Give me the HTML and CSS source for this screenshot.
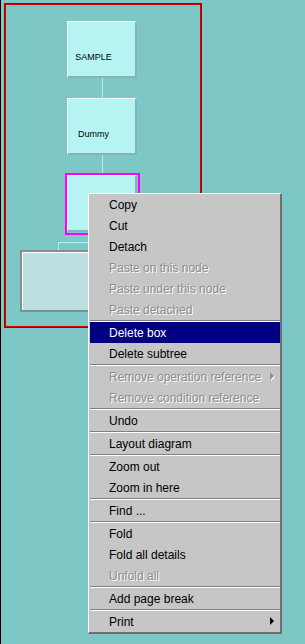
FILE: index.html
```html
<!DOCTYPE html>
<html lang="en">
<head>
  <meta charset="UTF-8" />
  <title>Diagram</title>
  <link rel="stylesheet" href="styles.css">
</head>
<body>

  <!-- diagram canvas -->
  <div class="canvas">
    <div class="frame"></div>

    <div class="node node-sample"><span>SAMPLE</span></div>
    <div class="wire wire-1"></div>
    <div class="node node-dummy"><span>Dummy</span></div>
    <div class="wire wire-2"></div>
    <div class="node node-third"></div>
    <div class="selected"></div>
    <div class="wire wire-3"></div>
    <div class="wire wire-4"></div>
    <div class="wire wire-5"></div>
    <div class="bigbox"></div>
  </div>

  <!-- context menu -->
  <div class="menu">
    <div class="item">Copy</div>
    <div class="item">Cut</div>
    <div class="item">Detach</div>
    <div class="item disabled">Paste on this node</div>
    <div class="item disabled">Paste under this node</div>
    <div class="item disabled">Paste detached</div>
    <div class="sep"></div>
    <div class="item active">Delete box</div>
    <div class="item">Delete subtree</div>
    <div class="sep"></div>
    <div class="item disabled sub">Remove operation reference</div>
    <div class="item disabled">Remove condition reference</div>
    <div class="sep"></div>
    <div class="item">Undo</div>
    <div class="sep"></div>
    <div class="item">Layout diagram</div>
    <div class="sep"></div>
    <div class="item">Zoom out</div>
    <div class="item">Zoom in here</div>
    <div class="sep"></div>
    <div class="item">Find ...</div>
    <div class="sep"></div>
    <div class="item">Fold</div>
    <div class="item">Fold all details</div>
    <div class="item disabled">Unfold all</div>
    <div class="sep"></div>
    <div class="item">Add page break</div>
    <div class="sep"></div>
    <div class="item sub">Print</div>
  </div>

</body>
</html>
```

FILE: styles.css
```css
body {
  margin: 0;
  width: 305px;
  height: 644px;
  overflow: hidden;
  background-color: #7ec7c7;
  font-family: 'Liberation Sans', Arial, sans-serif;
  position: relative;
  box-sizing: border-box;
  border-left: 1px solid #000;
}

.canvas {
  position: absolute;
  left: 0;
  top: 0;
  width: 305px;
  height: 644px;
}

.frame {
  position: absolute;
  left: 3px;
  top: 3px;
  width: 198px;
  height: 325px;
  box-sizing: border-box;
  border: 1px solid #a00000;
  box-shadow: inset 0 0 0 1px #d80000;
}

.node {
  position: absolute;
  left: 66px;
  width: 70px;
  height: 57px;
  box-sizing: border-box;
  background-color: #b6f4f4;
  border-top: 1px solid #fff;
  border-left: 1px solid #fff;
  border-right: 2px solid #86b4b4;
  border-bottom: 2px solid #86b4b4;
  padding: 30px 16px 0 0;
  text-align: center;
  font-size: 9px;
  color: #000;
}

.node-sample { top: 21px; }
.node-dummy { top: 98px; }
.node-third { top: 175px; }

.selected {
  position: absolute;
  left: 64px;
  top: 173px;
  width: 75px;
  height: 62px;
  box-sizing: border-box;
  border: 2px solid #ff00ff;
}

.wire {
  position: absolute;
  background-color: #b2eeee;
}

.wire-1 { left: 101px; top: 78px; width: 1px; height: 20px; }
.wire-2 { left: 101px; top: 155px; width: 1px; height: 18px; }
.wire-3 { left: 101px; top: 235px; width: 1px; height: 7px; }
.wire-4 { left: 57px; top: 242px; width: 45px; height: 1px; }
.wire-5 { left: 57px; top: 242px; width: 1px; height: 8px; }

.bigbox {
  position: absolute;
  left: 19px;
  top: 250px;
  width: 110px;
  height: 62px;
  box-sizing: border-box;
  border: 2px solid #878e8e;
  background-color: #bcdfdf;
  box-shadow: inset 1px 1px 0 #fff;
}

/* popup menu */
.menu {
  position: absolute;
  left: 87px;
  top: 193px;
  width: 194px;
  height: 441px;
  box-sizing: border-box;
  background-color: #c6c6c6;
  border-top: 1px solid #fff;
  border-left: 1px solid #fff;
  border-right: 2px solid #6e6e6e;
  border-bottom: 2px solid #6e6e6e;
  padding-left: 1px;
  font-size: 12px;
}

.item {
  position: relative;
  height: 21px;
  line-height: 23px;
  padding-left: 19px;
  color: #000;
  white-space: nowrap;
}

.item.disabled {
  color: #8d8d8d;
  text-shadow: 1px 1px 0 #fff;
}

.item.active {
  background-color: #000080;
  color: #fff;
}

.item.sub::after {
  content: "";
  position: absolute;
  right: 6px;
  top: 6px;
  border-left: 4px solid #000;
  border-top: 4px solid transparent;
  border-bottom: 4px solid transparent;
}

.item.disabled.sub::after {
  border-left-color: #8d8d8d;
  filter: drop-shadow(1px 1px 0 #fff);
}

.sep {
  height: 1px;
  background-color: #808080;
  border-bottom: 1px solid #fff;
}
```
